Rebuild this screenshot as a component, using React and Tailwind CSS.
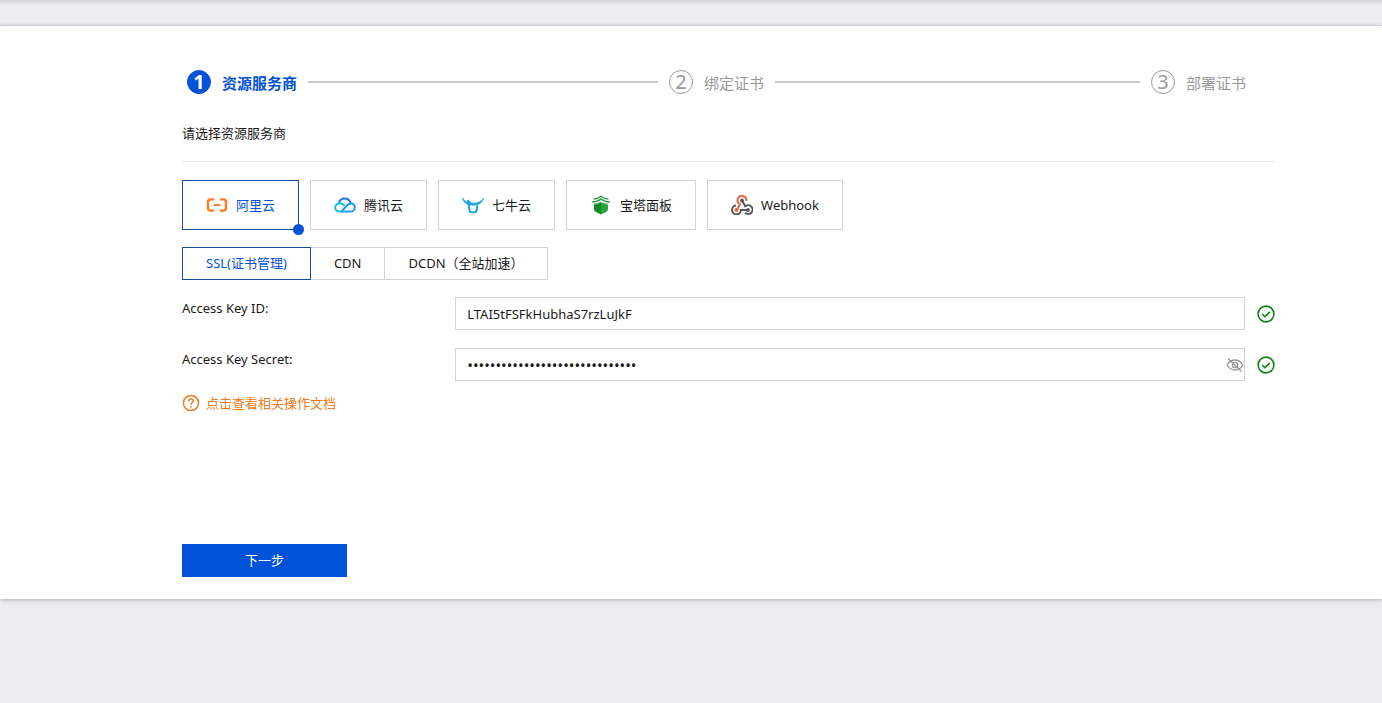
import React, { useState } from "react";

function AliyunIcon() {
  return (
    <svg viewBox="0 0 22 16" className="h-4 w-[22px]" fill="none" stroke="#ff7a1f" strokeWidth="2.4" aria-hidden="true">
      <path d="M8.200 2.400H4.600Q2 2.600 2 5v6q0 2.400 2.600 2.600h3.600" />
      <path d="M13.800 2.400h3.600Q20 2.600 20 5v6q0 2.400-2.600 2.600h-3.600" />
      <path d="M7.700 8h6.600" strokeWidth="1.900" />
    </svg>
  );
}

function TencentIcon() {
  return (
    <svg viewBox="0 0 22 16" className="h-4 w-[22px]" fill="none" strokeWidth="2" strokeLinecap="round" aria-hidden="true">
      <path d="M4.800 6.500C5.300 3.500 7.700 1.500 10.700 1.500c2.800 0 5 1.700 5.800 4.200" stroke="#2372e6" />
      <path d="M10 8.300C8.500 6.800 7.200 6.300 5.800 6.300 3.200 6.300 1.200 8.200 1.200 10.600S3.200 14.600 5.800 14.600h2" stroke="#10c4d8" />
      <path d="M7.300 14.600l5.900-6.300c1.100-1.200 2.200-1.900 3.600-1.900 2.300 0 4 1.800 4 4s-1.700 4.200-4 4.200z" stroke="#1e9be9" strokeLinejoin="round" />
    </svg>
  );
}

function QiniuIcon() {
  return (
    <svg viewBox="0 0 22 18" className="h-[18px] w-[22px]" fill="none" stroke="#1ba6dc" aria-hidden="true">
      <path d="M.5 2C2.500 5.500 6 7.200 11 7.200S19.500 5.500 21.500 2C20.500 6.800 16.500 9.200 11 9.200S1.500 6.800.5 2Z" fill="#1ba6dc" strokeWidth=".8" />
      <path d="M6 4 7.500 14.300Q7.800 16.200 9.400 16.200h3.200q1.700 0 2-1.900l.8-5" strokeWidth="2" />
      <path d="M6 4 9 8" strokeWidth="1.500" />
    </svg>
  );
}

function PagodaIcon() {
  return (
    <svg viewBox="-1 0 22 20" className="h-5 w-[22px]" aria-hidden="true">
      <path d="M3 8.500 10 7v12.500l-5.500-2.800Q3 16 3 14Z" fill="#15882c" />
      <path d="M17 8.500 10 7v12.500l5.500-2.800Q17 16 17 14Z" fill="#27a63d" />
      <path d="M2.500 4.200Q7 3.700 10 1.200q3 2.500 7.500 3M1.200 7Q7 6.500 10 4q3 2.500 8.800 3" fill="none" stroke="#219438" strokeWidth="1.300" />
      <path d="M3 9.200Q7 8.700 10 6.600q3 2.100 7 2.600" fill="none" stroke="#fff" strokeWidth=".6" />
    </svg>
  );
}

function WebhookIcon() {
  return (
    <svg viewBox="0 0 22 20" className="h-5 w-[22px]" fill="none" strokeWidth="2" aria-hidden="true">
      <path d="M15.300 5.800A4.400 4.400 0 1 0 8.900 9.200L6 14.600" stroke="#e8643c" />
      <path d="M5 10.600a4.400 4.400 0 1 0 4.900 4.300H17" stroke="#55555a" />
      <path d="M11 5.600l3.200 5.700a4.400 4.400 0 1 1-.1 6.500" stroke="#55555a" />
      <circle cx="11" cy="5.500" r="1.900" fill="#55555a" />
      <circle cx="5.400" cy="15" r="1.900" fill="#e8643c" />
      <circle cx="17" cy="15" r="1.900" fill="#55555a" />
    </svg>
  );
}

function CheckIcon() {
  return (
    <svg viewBox="0 0 18 18" className="size-[18px] shrink-0" fill="none" stroke="#0b8516" strokeWidth="1.600" role="img" aria-label="OK">
      <circle cx="9" cy="9" r="7.900" />
      <path d="M5.200 9l2.600 2.700L12.900 6.800" />
    </svg>
  );
}

function EyeOffIcon() {
  return (
    <svg viewBox="0 0 18 16" className="h-4 w-[18px]" fill="none" stroke="#999" strokeWidth="1.300" aria-hidden="true">
      <path d="M1.200 8C3 4.800 5.700 3 9 3s6 1.800 7.800 5C15 11.200 12.300 13 9 13S3 11.200 1.200 8Z" />
      <circle cx="9" cy="8" r="2.700" />
      <path d="M2 1.500l13.500 13" />
    </svg>
  );
}

function HelpIcon() {
  return (
    <svg viewBox="0 0 18 18" className="size-[18px]" fill="none" stroke="currentColor" strokeWidth="1.500" aria-hidden="true">
      <circle cx="9" cy="9" r="7.600" />
      <path d="M6.700 7.200Q6.700 4.900 9 4.900t2.300 2.100C11.300 8.600 9 8.600 9 10.700" />
      <path d="M9 12v1.500" />
    </svg>
  );
}

const steps = ["资源服务商", "绑定证书", "部署证书"];
const providers = [
  { name: "阿里云", Icon: AliyunIcon },
  { name: "腾讯云", Icon: TencentIcon },
  { name: "七牛云", Icon: QiniuIcon },
  { name: "宝塔面板", Icon: PagodaIcon },
  { name: "Webhook", Icon: WebhookIcon },
];
const products = ["SSL(证书管理)", "CDN", "DCDN（全站加速）"];

function Steps() {
  return (
    <ol className="flex h-6 items-center pr-[29px] pl-[5px] text-[15px] text-[#999]">
      {steps.map((name, i) => (
        <li key={name} className={`flex items-center gap-[11px] ${i < 2 ? "flex-1 basis-0 pr-[11px]" : ""} ${i === 0 ? "font-bold text-[#0052d9]" : ""}`}>
          <span className={`flex size-6 shrink-0 items-center justify-center rounded-full border text-xl leading-none ${i === 0 ? "border-[#0052d9] bg-[#0052d9] text-white" : "border-[#999]"}`}>
            {i + 1}
          </span>
          <span className="pt-0.5 whitespace-nowrap">{name}</span>
          {i < 2 && <span className="h-0.5 flex-1 bg-[#c8c8c8]" />}
        </li>
      ))}
    </ol>
  );
}

export default function App() {
  const [provider, setProvider] = useState(0);
  const [product, setProduct] = useState(0);
  const [keyId, setKeyId] = useState("LTAI5tFSFkHubhaS7rzLuJkF");
  const [secret, setSecret] = useState("abcdefghijklmnopqrstuvwxyz0123");
  const [visible, setVisible] = useState(false);

  return (
    <div className="min-h-screen bg-[#eaedf2] font-['Noto_Sans','Noto_Sans_CJK_SC',sans-serif] text-[13px] leading-5 text-[#1a1a1a]">
      <div className="h-[25px] bg-linear-to-b from-[#cdd1d7] to-[#eaedf2] to-20%" />
      <main className="border-t border-[#cfd3d9] bg-white pt-11 pr-[107px] pb-[22px] pl-[182px] shadow-[0_1px_4px_rgba(0,0,0,0.25)]">
        <Steps />
        <h1 className="mt-[29px] border-b border-[#e7e7e7] pb-[18px]">请选择资源服务商</h1>

        <div className="mt-[18px] flex flex-wrap gap-[11px]">
          {providers.map(({ name, Icon }, i) => (
            <button
              key={name}
              type="button"
              aria-pressed={provider === i}
              onClick={() => setProvider(i)}
              className={`relative flex h-[50px] items-center gap-2 border px-[23px] ${provider === i ? "border-[#134fa8] text-[#0052d9]" : "border-[#cfd5da]"}`}
            >
              <Icon />
              {name}
              {provider === i && <span className="absolute -right-[6px] -bottom-[6px] size-[11px] rounded-full bg-[#0052d9]" />}
            </button>
          ))}
        </div>

        <div className="mt-[17px] flex">
          {products.map((name, i) => (
            <button
              key={name}
              type="button"
              aria-pressed={product === i}
              onClick={() => setProduct(i)}
              className={`-ml-px h-[33px] border px-[23px] pb-0.5 first:ml-0 ${product === i ? "relative border-[#134f98] text-[#0052d9]" : "border-[#cfd5da]"}`}
            >
              {name}
            </button>
          ))}
        </div>

        <div className="mt-[17px] flex">
          <label htmlFor="key-id" className="w-1/4 pt-px">Access Key ID:</label>
          <div className="flex flex-1 items-center gap-3">
            <input
              id="key-id"
              value={keyId}
              onChange={(e) => setKeyId(e.target.value)}
              className="h-[33px] min-w-0 flex-1 border border-[#cfd5da] px-[11px] outline-none"
            />
            <CheckIcon />
          </div>
        </div>

        <div className="mt-[18px] flex">
          <label htmlFor="key-secret" className="w-1/4 pt-px">Access Key Secret:</label>
          <div className="flex flex-1 items-center gap-3">
            <div className="flex h-[33px] min-w-0 flex-1 items-center border border-[#cfd5da]">
              <input
                id="key-secret"
                type={visible ? "text" : "password"}
                value={secret}
                onChange={(e) => setSecret(e.target.value)}
                className="h-full min-w-0 flex-1 px-[11px] text-[15px] outline-none"
              />
              <button type="button" aria-label="显示密钥" onClick={() => setVisible(!visible)}>
                <EyeOffIcon />
              </button>
            </div>
            <CheckIcon />
          </div>
        </div>

        <a href="#docs" className="mt-3 inline-flex items-center gap-1.5 text-[#ed7b20]">
          <HelpIcon />
          点击查看相关操作文档
        </a>

        <button type="button" className="mt-[127px] block h-[33px] w-[165px] bg-[#0052d9] pb-0.5 text-white">
          下一步
        </button>
      </main>
    </div>
  );
}
